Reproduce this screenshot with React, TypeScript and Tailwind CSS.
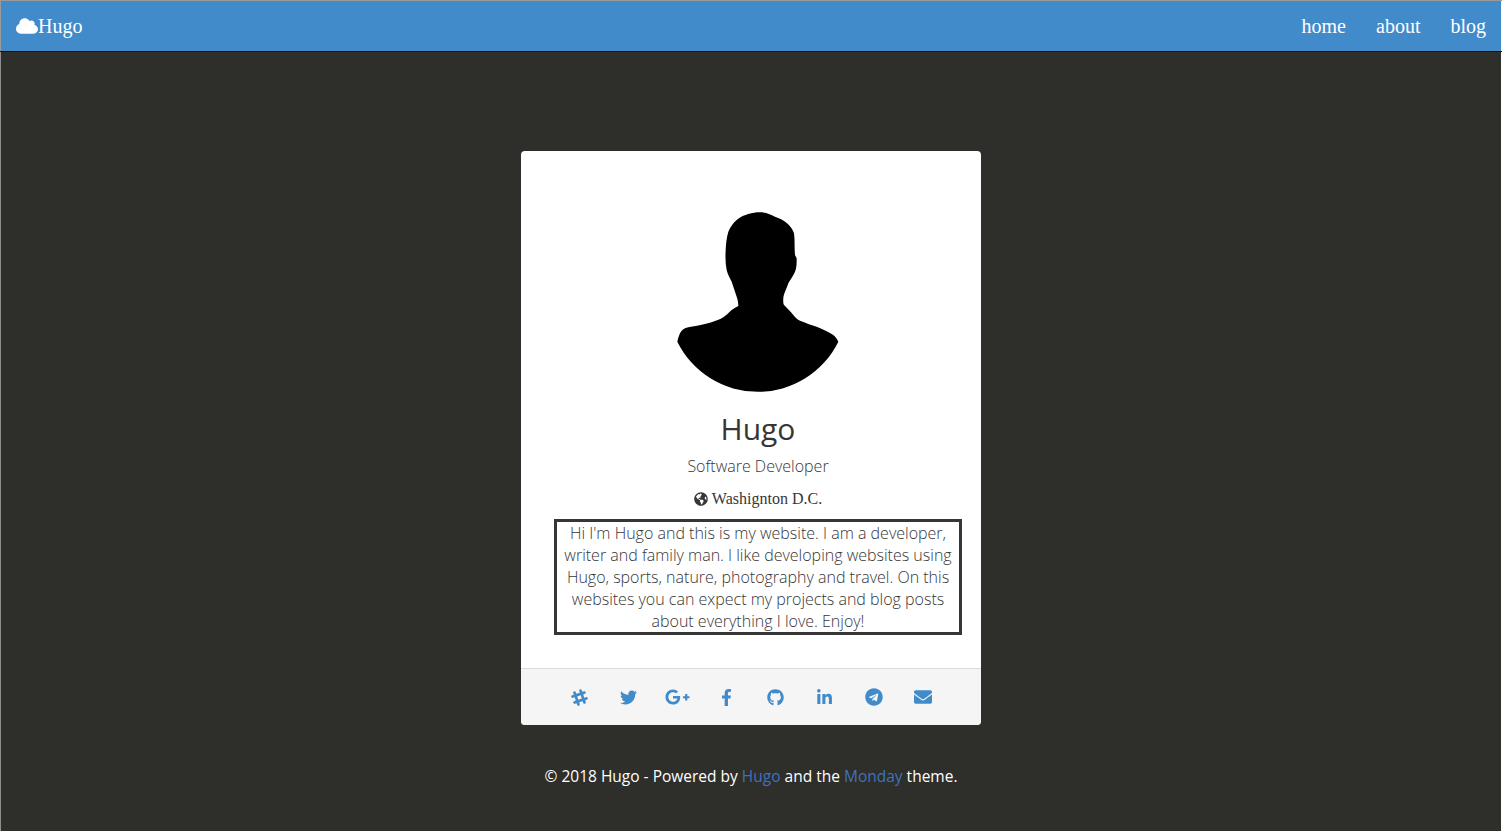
import { FaCloud, FaEnvelope, FaFacebookF, FaGithub, FaGlobeAmericas, FaGooglePlusG, FaLinkedinIn, FaSlackHash, FaTelegram, FaTwitter } from 'react-icons/fa';

const socials = [
  { name: 'slack', icon: FaSlackHash, size: 'w-[19px] h-[19px]' },
  { name: 'twitter', icon: FaTwitter, size: 'w-[17px] h-[17px]' },
  { name: 'google-plus', icon: FaGooglePlusG, size: 'w-[25px] h-[20px]' },
  { name: 'facebook', icon: FaFacebookF, size: 'w-[17px] h-[17px]' },
  { name: 'github', icon: FaGithub, size: 'w-[17px] h-[17px]' },
  { name: 'linkedin', icon: FaLinkedinIn, size: 'w-[17px] h-[17px]' },
  { name: 'telegram', icon: FaTelegram, size: 'w-[18px] h-[18px]' },
  { name: 'email', icon: FaEnvelope, size: 'w-[18px] h-[18px]' },
];

function Avatar() {
  return (
    <svg viewBox="9 0 570 600" className="w-[190px] h-[200px]" aria-label="Profile picture">
      <path
        fill="#000"
        d="M300 37 C315 37 328 40 345 50 C370 58 395 75 402 100 C405 120 403 145 405 165 L410 175 C410 190 410 205 405 215 C397 232 390 240 385 250 C378 270 370 285 370 295 C369 305 370 310 372 315 C382 325 392 335 400 345 C407 355 412 358 420 362 C440 370 455 375 470 380 C490 388 505 395 520 405 C527 411 532 418 535 425 A269 269 0 0 1 52 425 C55 412 58 400 65 392 C70 387 77 384 85 382 C108 378 130 373 150 368 C165 364 178 359 190 352 C200 345 207 337 215 330 C222 325 229 321 235 318 C235 308 233 298 230 290 C225 275 220 260 215 245 C208 232 203 222 200 210 C196 190 196 170 197 150 C198 130 200 112 205 95 C212 80 220 68 230 60 C242 50 254 45 265 42 C277 39 288 37 300 37 Z"
      />
    </svg>
  );
}

export default function App() {
  return (
    <div className="min-h-[831px] bg-[#2e2e2a] flex flex-col items-center font-['Open_Sans',sans-serif] shadow-[inset_1px_0_0_#8f8f8f,inset_-1px_0_0_#fff]">
      <nav className="w-full h-[52px] bg-[#428bca] border-b border-[#111] shadow-[inset_1px_1px_0_#9a9a9a,inset_-1px_0_0_#fff] flex items-center justify-between pl-[16px] pr-[16px] font-['Liberation_Serif',serif] text-white text-[20px]">
        <a href="#" className="flex items-center">
          <FaCloud className="w-[22px] h-[18px]" />
          <span>Hugo</span>
        </a>
        <div className="flex gap-[30px]">
          <a href="#">home</a>
          <a href="#">about</a>
          <a href="#">blog</a>
        </div>
      </nav>

      <main className="mt-[99px] w-[460px] bg-white rounded-[4px] flex flex-col items-center">
        <div className="flex flex-col items-center pl-[14px] pt-[49px] pb-[33px] w-full">
          <Avatar />
          <h1 className="mt-[6px] text-[30px] leading-[45px] text-[#363636]">Hugo</h1>
          <p className="mt-[3px] text-[16px] leading-[24px] font-light text-[#363636]">Software Developer</p>
          <p className="mt-[9px] flex items-center gap-[4px] font-['Liberation_Serif',serif] text-[16px] leading-[24px] text-[#363636]">
            <FaGlobeAmericas className="w-[14px] h-[14px]" />
            Washignton D.C.
          </p>
          <p className="mt-[8px] w-[408px] border-[3px] border-[#363636] text-center text-[16px] leading-[22px] font-light text-[#363636]">
            Hi I'm Hugo and this is my website. I am a developer, writer and family man. I like developing websites using Hugo, sports, nature, photography and travel. On this websites you can expect my projects and blog posts about everything I love. Enjoy!
          </p>
        </div>
        <div className="w-full h-[57px] bg-[#f5f5f5] border-t border-[#dbdbdb] rounded-b-[4px] flex items-center justify-center gap-[29px] text-[#428bca]">
          {socials.map((s) => (
            <a href="#" key={s.name} className="w-[20px] h-[20px] flex items-center justify-center">
              <s.icon className={`${s.size} shrink-0`} />
            </a>
          ))}
        </div>
      </main>

      <footer className="mt-[39px] text-[15.5px] leading-[24px] text-white">
        © 2018 Hugo - Powered by <a href="#" className="text-[#3f72bd]">Hugo</a> and the <a href="#" className="text-[#3f72bd]">Monday</a> theme.
      </footer>
    </div>
  );
}
